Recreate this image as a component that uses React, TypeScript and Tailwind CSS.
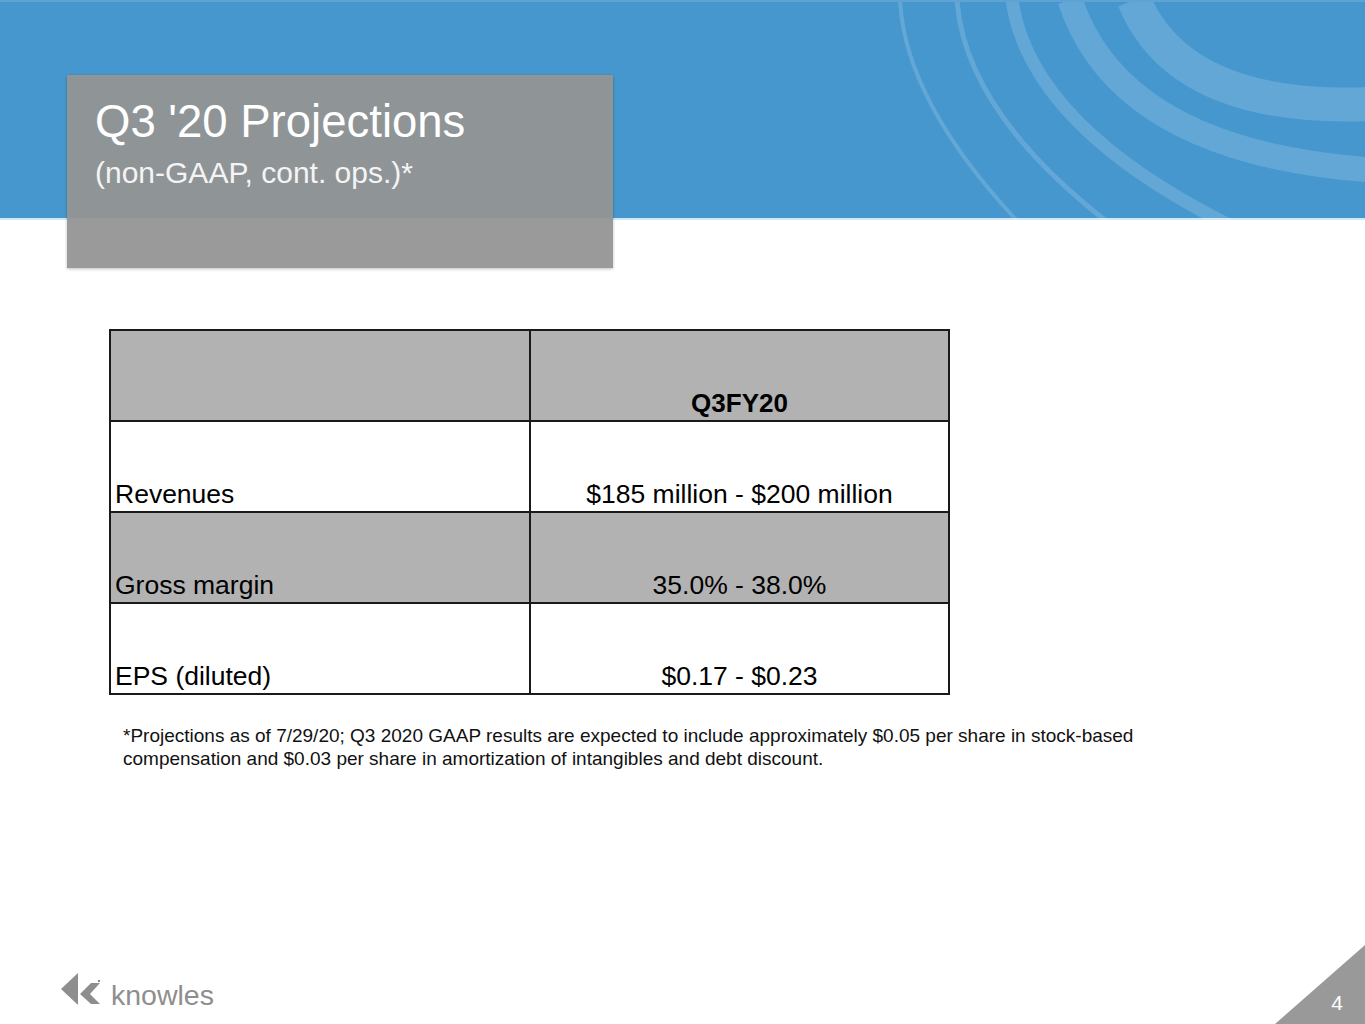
import React from 'react'

const rows = [
  { label: 'Revenues', value: '$185 million - $200 million', shaded: false },
  { label: 'Gross margin', value: '35.0% - 38.0%', shaded: true },
  { label: 'EPS (diluted)', value: '$0.17 - $0.23', shaded: false },
]

function HeaderArcs() {
  return (
    <svg className="absolute inset-0 h-[218px] w-[1365px]" viewBox="0 0 1365 218" fill="none">
      <g stroke="#ffffff" strokeOpacity="0.16" strokeLinecap="butt">
        <path d="M900 -2 Q905 100 1020 222" strokeWidth="4" />
        <path d="M957 -2 Q965 110 1110 222" strokeWidth="5" />
        <path d="M1012 -2 Q1030 125 1235 226" strokeWidth="13" />
        <path d="M1070 -2 Q1120 150 1372 168" strokeWidth="25" />
        <path d="M1134 -2 Q1180 110 1372 102" strokeWidth="34" />
      </g>
    </svg>
  )
}

function KnowlesLogo() {
  return (
    <div className="flex items-end pb-[15px] pl-[60px]">
      <svg className="mb-[4px] h-[32px] w-[43px]" viewBox="0 0 43 32" fill="#8e8e8e">
        <polygon points="1,16 18,0 18,32" />
        <polygon points="20,21 31,10 40,10 30,21 40,31 31,31" />
        <circle cx="39" cy="8" r="1.2" />
      </svg>
      <span className="ml-[8px] text-[28.5px] leading-[28px] text-[#8e8e8e]">knowles</span>
    </div>
  )
}

export default function App() {
  return (
    <div className="relative flex min-h-[1024px] w-[1365px] flex-col overflow-hidden bg-white font-['Liberation_Sans',Arial,sans-serif] text-black">
      <header className="relative h-[220px] border-t-2 border-b-2 border-t-[#5ea3d3] border-b-[#cfe9f7] bg-[#4597cd] pl-[67px] pt-[73px]">
        <HeaderArcs />
        <div className="relative h-[193px] w-[546px] bg-[rgba(148,148,148,0.94)] pl-[28px] pt-[24px] text-white shadow-[0_1px_3px_rgba(0,0,0,0.25)]">
          <h1 className="text-[45.5px] leading-[46px]">Q3 &apos;20 Projections</h1>
          <p className="mt-[11px] text-[30px] leading-[34px] text-[#f4f4f4]">(non-GAAP, cont. ops.)*</p>
        </div>
      </header>

      <main className="ml-[109px] mt-[109px]">
        <div className="w-[841px] border-2 border-[#1a1a1a]">
          <div className="grid h-[91px] grid-cols-[420px_1fr] border-b-2 border-[#1a1a1a] bg-[#b2b2b2]">
            <div className="border-r-2 border-[#1a1a1a]" />
            <div className="flex items-end justify-center pb-[2px] text-[26px] font-bold leading-[30px]">Q3FY20</div>
          </div>
          {rows.map((row, i) => (
            <div
              key={row.label}
              className={`grid grid-cols-[420px_1fr] text-[26.5px] leading-[30px] ${
                i < rows.length - 1 ? 'h-[91px] border-b-2 border-[#1a1a1a]' : 'h-[89px]'
              } ${row.shaded ? 'bg-[#b2b2b2]' : 'bg-white'}`}
            >
              <div className="flex items-end border-r-2 border-[#1a1a1a] pb-[2px] pl-[4px]">{row.label}</div>
              <div className="flex items-end justify-center pb-[2px]">{row.value}</div>
            </div>
          ))}
        </div>

        <p className="ml-[14px] mt-[29px] w-[1030px] text-[19px] leading-[23px] text-[#111111]">
          *Projections as of 7/29/20; Q3 2020 GAAP results are expected to include approximately $0.05 per share in stock-based compensation and $0.03 per share in amortization of intangibles and debt discount.
        </p>
      </main>

      <footer className="mt-auto flex h-[79px] items-end justify-between">
        <KnowlesLogo />
        <div className="flex h-[79px] w-[90px] items-end justify-end bg-[#999999] pb-[11px] pr-[22px] text-[21px] leading-[21px] text-white [clip-path:polygon(100%_0,100%_100%,0_100%)]">
          4
        </div>
      </footer>
    </div>
  )
}
